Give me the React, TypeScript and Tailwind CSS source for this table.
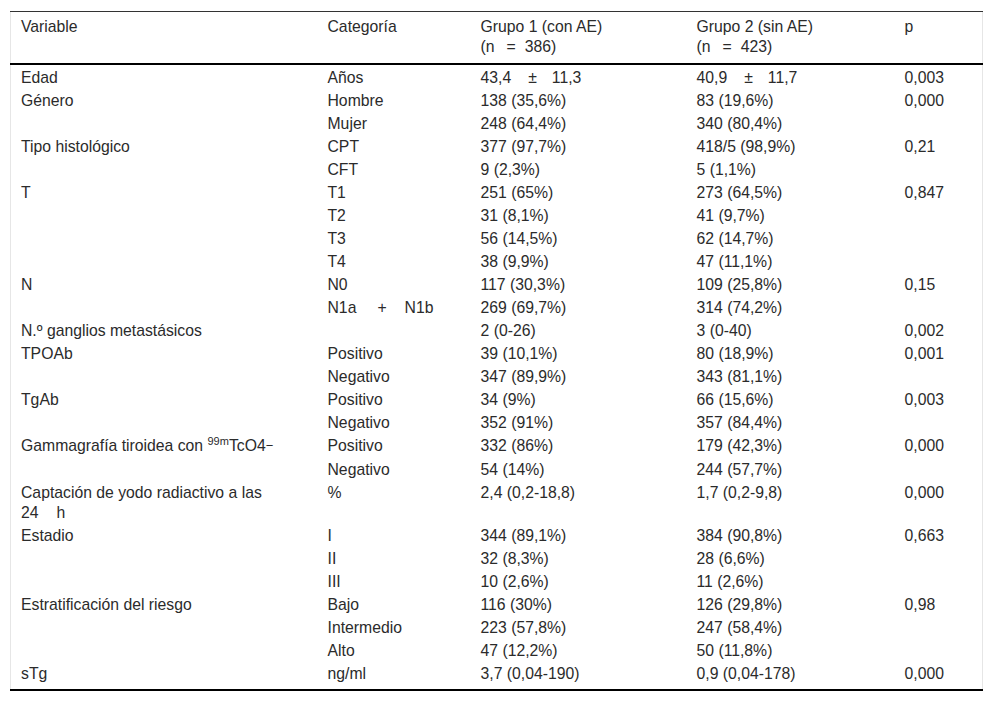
import React from "react";

type Row = [React.ReactNode, React.ReactNode, React.ReactNode, React.ReactNode, React.ReactNode];

const PM = (a: string, op: string, b: string) => (
  <>
    {a}
    <span className="ml-[17px] mr-[15px]">{op}</span>
    {b}
  </>
);

const rows: Row[] = [
  ["Edad", "Años", PM("43,4", "±", "11,3"), PM("40,9", "±", "11,7"), "0,003"],
  ["Género", "Hombre", "138 (35,6%)", "83 (19,6%)", "0,000"],
  ["", "Mujer", "248 (64,4%)", "340 (80,4%)", ""],
  ["Tipo histológico", "CPT", "377 (97,7%)", "418/5 (98,9%)", "0,21"],
  ["", "CFT", "9 (2,3%)", "5 (1,1%)", ""],
  ["T", "T1", "251 (65%)", "273 (64,5%)", "0,847"],
  ["", "T2", "31 (8,1%)", "41 (9,7%)", ""],
  ["", "T3", "56 (14,5%)", "62 (14,7%)", ""],
  ["", "T4", "38 (9,9%)", "47 (11,1%)", ""],
  ["N", "N0", "117 (30,3%)", "109 (25,8%)", "0,15"],
  ["", <>N1a<span className="ml-[21px] mr-[18px]">+</span>N1b</>, "269 (69,7%)", "314 (74,2%)", ""],
  ["N.º ganglios metastásicos", "", "2 (0-26)", "3 (0-40)", "0,002"],
  ["TPOAb", "Positivo", "39 (10,1%)", "80 (18,9%)", "0,001"],
  ["", "Negativo", "347 (89,9%)", "343 (81,1%)", ""],
  ["TgAb", "Positivo", "34 (9%)", "66 (15,6%)", "0,003"],
  ["", "Negativo", "352 (91%)", "357 (84,4%)", ""],
  [
    <>
      Gammagrafía tiroidea con <span className="relative -top-[6px] text-[11px]">99m</span>TcO4
      <span className="relative -top-[1px] text-[13px]">−</span>
    </>,
    "Positivo",
    "332 (86%)",
    "179 (42,3%)",
    "0,000",
  ],
  ["", "Negativo", "54 (14%)", "244 (57,7%)", ""],
  [
    <>
      Captación de yodo radiactivo a las
      <br />
      24<span className="ml-[18px]">h</span>
    </>,
    "%",
    "2,4 (0,2-18,8)",
    "1,7 (0,2-9,8)",
    "0,000",
  ],
  ["Estadio", "I", "344 (89,1%)", "384 (90,8%)", "0,663"],
  ["", "II", "32 (8,3%)", "28 (6,6%)", ""],
  ["", "III", "10 (2,6%)", "11 (2,6%)", ""],
  ["Estratificación del riesgo", "Bajo", "116 (30%)", "126 (29,8%)", "0,98"],
  ["", "Intermedio", "223 (57,8%)", "247 (58,4%)", ""],
  ["", "Alto", "47 (12,2%)", "50 (11,8%)", ""],
  ["sTg", "ng/ml", "3,7 (0,04-190)", "0,9 (0,04-178)", "0,000"],
];

const N = (v: string) => (
  <>
    (n<span className="ml-[12px] mr-[9px]">=</span>
    {v})
  </>
);

export default function App() {
  return (
    <div
      className="bg-white min-h-[702px] pt-[11px] pl-[10px] text-[#2b2b2b] text-[15.75px]"
      style={{ fontFamily: '"Liberation Sans", Arial, sans-serif' }}
    >
      <table className="table-fixed border-collapse w-[972px] border-x border-x-[#e6e6e6]">
        <colgroup>
          <col className="w-[307px]" />
          <col className="w-[153px]" />
          <col className="w-[216px]" />
          <col className="w-[208px]" />
          <col className="w-[88px]" />
        </colgroup>
        <thead>
          <tr className="border-t border-t-[#333] border-b-2 border-b-black">
            <th className="text-left font-normal align-top pl-[10px] pt-[5px] pb-[6px] leading-[20px]">Variable</th>
            <th className="text-left font-normal align-top pl-[10px] pt-[5px] pb-[6px] leading-[20px]">Categoría</th>
            <th className="text-left font-normal align-top pl-[10px] pt-[5px] pb-[6px] leading-[20px]">
              Grupo 1 (con AE)
              <br />
              {N("386")}
            </th>
            <th className="text-left font-normal align-top pl-[10px] pt-[5px] pb-[6px] leading-[20px]">
              Grupo 2 (sin AE)
              <br />
              {N("423")}
            </th>
            <th className="text-left font-normal align-top pl-[10px] pt-[5px] pb-[6px] leading-[20px]">p</th>
          </tr>
        </thead>
        <tbody className="border-b-2 border-b-black">
          {rows.map((r, i) => (
            <tr
              key={i}
              className={i === 0 ? "[&>td]:pt-[3px]" : i === rows.length - 1 ? "[&>td]:pb-[5px]" : ""}
            >
              {r.map((c, j) => (
                <td key={j} className="align-top pl-[10px] py-[1.5px] leading-[20px] whitespace-nowrap">
                  {c}
                </td>
              ))}
            </tr>
          ))}
        </tbody>
      </table>
    </div>
  );
}
